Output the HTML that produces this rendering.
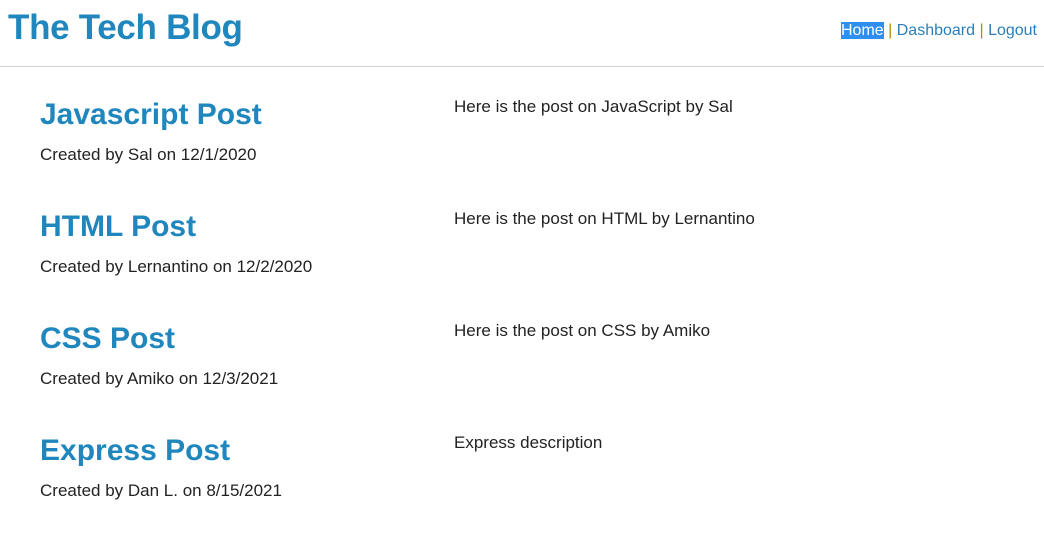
<!DOCTYPE html>
<html><head><style>
body{margin:0;font-family:"Liberation Sans",sans-serif;background:#fff;width:1044px;height:539px;overflow:hidden;position:relative}
.h{position:absolute;left:8px;top:8px;font-size:35px;font-weight:bold;color:#1f87bd;letter-spacing:-0.3px}
.nav{position:absolute;right:7px;top:22px;font-size:16px;color:#b8860b}
.nav a{color:#2a7fba;text-decoration:none}
.nav .sel{background:#2f8ff0;color:#fff}
.line{position:absolute;left:0;top:66px;width:1044px;height:1px;background:#cfcfcf}
.t{position:absolute;left:40px;font-size:30px;font-weight:bold;color:#1f87bd;letter-spacing:0px}
.c{position:absolute;left:40px;font-size:17px;color:#222}
.d{position:absolute;left:454px;font-size:17px;color:#222}
</style></head><body>
<div class="h">The Tech Blog</div>
<div class="nav"><a class="sel">Home</a> | <a>Dashboard</a> | <a>Logout</a></div>
<div class="line"></div>
<div class="t" style="top:98px">Javascript Post</div><div class="c" style="top:145px">Created by Sal on 12/1/2020</div><div class="d" style="top:97px">Here is the post on JavaScript by Sal</div>
<div class="t" style="top:210px">HTML Post</div><div class="c" style="top:257px">Created by Lernantino on 12/2/2020</div><div class="d" style="top:209px">Here is the post on HTML by Lernantino</div>
<div class="t" style="top:322px">CSS Post</div><div class="c" style="top:369px">Created by Amiko on 12/3/2021</div><div class="d" style="top:321px">Here is the post on CSS by Amiko</div>
<div class="t" style="top:434px">Express Post</div><div class="c" style="top:481px">Created by Dan L. on 8/15/2021</div><div class="d" style="top:433px">Express description</div>
</body></html>
